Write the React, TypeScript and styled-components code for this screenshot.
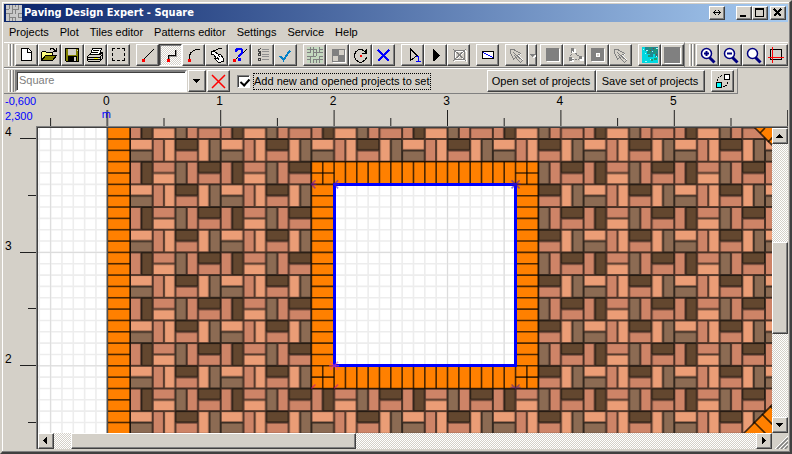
import React from "react";
import styled, { createGlobalStyle, css } from "styled-components";

const FACE = "#d4d0c8";
const SHADOW = "#808080";
const DARK = "#404040";
const CHECKER = `repeating-conic-gradient(#ffffff 0 25%, ${FACE} 0 50%) 0 0 / 2px 2px`;

const GlobalStyle = createGlobalStyle`
  * { box-sizing: border-box; }
  html, body, #root { height: 100%; }
  body {
    margin: 0;
    background: ${FACE};
    color: #000;
    font: 11px/14px "Liberation Sans", Arial, sans-serif;
    overflow: hidden;
  }
  button, input { font: inherit; color: inherit; }
`;

const raised = css`
  background: ${FACE};
  border: 1px solid;
  border-color: #fff ${DARK} ${DARK} #fff;
  box-shadow: inset -1px -1px 0 ${SHADOW};
`;

const Frame = styled.div`
  display: flex;
  flex-direction: column;
  height: 100%;
  min-height: 300px;
  padding: 2px;
  background: ${FACE};
  border: 2px solid;
  border-color: ${FACE} ${DARK} ${DARK} ${FACE};
  box-shadow: inset -1px -1px 0 ${SHADOW}, inset 1px 1px 0 #fff;
`;

const TitleBar = styled.header`
  display: flex;
  align-items: center;
  flex: none;
  height: 18px;
  padding: 0 2px;
  background: linear-gradient(90deg, #0a246a, #a6caf0);
`;

const Title = styled.h1`
  flex: 1;
  margin: 0 0 0 2px;
  color: #fff;
  font: bold 11px/16px "DejaVu Sans Condensed", "Liberation Sans", sans-serif;
  white-space: nowrap;
`;

const CaptionButton = styled.button<{ $gap?: number }>`
  ${raised}
  display: grid;
  place-items: center;
  width: 16px;
  height: 14px;
  padding: 0;
  margin-right: ${(p) => p.$gap ?? 0}px;
`;

const MenuBar = styled.nav`
  display: flex;
  flex: none;
  height: 20px;
  padding-left: 5px;
  gap: 11px;
  line-height: 18px;
`;

const MenuItem = styled.button`
  padding: 0;
  border: 0;
  background: none;
  white-space: nowrap;
`;

const ToolRow = styled.div`
  display: flex;
  flex: none;
  height: 26px;
`;

const Band = styled.div<{ $grow?: boolean }>`
  display: flex;
  align-items: center;
  flex: ${(p) => (p.$grow ? "1 0 auto" : "none")};
  padding-left: 4px;
  border-top: 1px solid #fff;
  border-bottom: 1px solid ${SHADOW};
  border-right: ${(p) => (p.$grow ? `1px solid ${SHADOW}` : "0")};
`;

const Grip = styled.span`
  flex: none;
  width: 6px;
  height: 22px;
  margin-right: 1px;
  background: linear-gradient(90deg, #fff 0 1px, ${FACE} 1px 2px, ${SHADOW} 2px 3px) 0 0 / 3px 100%;
`;

const Group = styled.div<{ $tight?: boolean }>`
  display: flex;
  margin-right: ${(p) => (p.$tight ? 3 : 6)}px;
  &:last-child { margin-right: 0; }
`;

const ToolButton = styled.button<{ $on?: boolean; $narrow?: boolean }>`
  ${raised}
  display: grid;
  place-items: center start;
  flex: none;
  width: ${(p) => (p.$narrow ? 9 : 23)}px;
  height: 22px;
  padding: 0;
  overflow: hidden;
  ${(p) =>
    p.$on &&
    css`
      background: ${CHECKER};
      border-color: ${DARK} #fff #fff ${DARK};
      box-shadow: inset 1px 1px 0 ${SHADOW};
    `}
`;

const SetBand = styled(Band)`
  padding-right: 3px;
  border-right: 1px solid ${SHADOW};
`;

const SetName = styled.input`
  width: 172px;
  height: 22px;
  padding: 0 2px 2px;
  border: 2px solid;
  border-color: ${SHADOW} #fff #fff ${SHADOW};
  background: #fff;
  color: #808080;
  outline: 0;
  box-shadow: inset 1px 1px 0 ${DARK};
`;

const DropButton = styled.button`
  ${raised}
  display: grid;
  place-items: center;
  width: 18px;
  height: 22px;
  padding: 0;
  margin: 0 1px;
`;

const SetCheck = styled.label`
  display: flex;
  align-items: center;
  gap: 3px;
  margin: 0 56px 0 7px;
  white-space: nowrap;
  span { border: 1px dotted #000; line-height: 15px; }
`;

const CheckBox = styled.input`
  appearance: none;
  width: 13px;
  height: 13px;
  margin: 0;
  background: #fff;
  border: 1px solid;
  border-color: ${SHADOW} #fff #fff ${SHADOW};
  box-shadow: inset 1px 1px 0 ${DARK};
  &:checked::before {
    content: "";
    display: block;
    width: 4px;
    height: 7px;
    margin: 1px 0 0 4px;
    border: solid #000;
    border-width: 0 2px 2px 0;
    transform: rotate(42deg);
  }
`;

const TextButton = styled.button`
  ${raised}
  width: 109px;
  height: 22px;
  padding: 0;
  white-space: nowrap;
`;

const Workspace = styled.main`
  display: grid;
  flex: 1;
  min-height: 0;
  grid-template: 32px minmax(0, 1fr) / 32px minmax(0, 1fr);
`;

const Coordinates = styled.output`
  padding-left: 1px;
  color: #0000ff;
  line-height: 15px;
  white-space: nowrap;
  z-index: 1;
`;

const Ruler = styled.svg`
  display: block;
  width: 100%;
  height: 100%;
  overflow: hidden;
`;

const Viewport = styled.section`
  display: grid;
  grid-template: minmax(0, 1fr) 16px / minmax(0, 1fr) 16px;
  margin-bottom: 1px;
  border: solid;
  border-width: 1px 0 0 1px;
  border-color: ${SHADOW};
  box-shadow: inset 1px 1px 0 ${DARK};
  padding: 1px 0 0 1px;
`;

const Drawing = styled.svg`
  display: block;
  width: 100%;
  height: 100%;
  background: #fff;
`;

const ScrollBar = styled.div<{ $vertical?: boolean }>`
  display: flex;
  flex-direction: ${(p) => (p.$vertical ? "column" : "row")};
  background: ${CHECKER};
`;

const ScrollButton = styled.button`
  ${raised}
  display: grid;
  place-items: center;
  flex: none;
  width: 16px;
  height: 16px;
  padding: 0;
`;

const TrackPart = styled.span<{ $weight: number }>`
  flex: ${(p) => p.$weight} 1 0;
`;

const Thumb = styled.span<{ $weight: number }>`
  ${raised}
  flex: ${(p) => p.$weight} 1 0;
`;

/* ---------- icons: 20 x 20, drawn on whole pixels ---------- */

const Icon = ({ children, smooth }: { children: React.ReactNode; smooth?: boolean }) => (
  <svg width="20" height="20" viewBox="0 0 20 20" fill="none" stroke="#000" shapeRendering={smooth ? "auto" : "crispEdges"} aria-hidden="true">
    {children}
  </svg>
);

const RedDot = ({ x, y }: { x: number; y: number }) => <rect x={x} y={y} width="3" height="3" fill="#f00" stroke="none" />;

const NewIcon = () => (
  <Icon>
    <path d="M5.5 3.5h7l3 3v9h-10z" fill="#fff" />
    <path d="M11.5 3.5v4h4" />
  </Icon>
);
const OpenIcon = () => (
  <Icon>
    <path d="M2.5 15.5v-8l1-1h3l1 1h6v3" fill="#ffff80" />
    <path d="M2.5 15.5l4-5h11l-4 5z" fill="#808000" />
    <path d="M10.5 4.5h1v-1h3v1h1v1h1v1M17.5 3v4M14 6.5h4" />
  </Icon>
);
const SaveIcon = () => (
  <Icon>
    <path d="M3.5 3.5h13v13h-12l-1-1z" fill="#808000" />
    <rect x="6" y="4" width="8" height="6" fill={FACE} stroke="none" />
    <rect x="6" y="11" width="9" height="5" fill="#000" stroke="none" />
    <rect x="12" y="12" width="2" height="4" fill={FACE} stroke="none" />
    <path d="M15 5.5h1" stroke={FACE} />
  </Icon>
);
const PrintIcon = () => (
  <Icon>
    <path d="M5.5 9.5l2-6h9l-2 6" fill="#fff" />
    <path d="M8 5.5h6M7 7.5h6" />
    <path d="M4.5 9.5h11l2-2v6l-3 3h-11l-1-1v-4z" fill={FACE} />
    <path d="M2.5 12.5h12l3-3M3 14.5h12M15.5 12v4M14.5 10l3-3" />
    <path d="M9 13.5h4" stroke="#ffff00" />
  </Icon>
);
const SelectIcon = () => (
  <Icon>
    <path d="M4 3.5h3m2 0h3m2 0h3M4 15.5h3m2 0h3m2 0h3M4.5 3v3m0 2v3m0 2v3M16.5 3v3m0 2v3m0 2v3" />
  </Icon>
);
const LineIcon = () => (
  <Icon>
    <path d="M7 14L17 4" />
    <RedDot x={5} y={14} />
  </Icon>
);
const PolylineIcon = () => (
  <Icon>
    <path d="M8.5 15v-4.5h7V5" />
    <path d="M9.5 15v-3.500h7V5" strokeOpacity="0.35" />
    <RedDot x={7} y={14} />
  </Icon>
);
const ArcIcon = () => (
  <Icon>
    <path d="M6.500 14v-3l1-3 3-2.500 3-1h3.500" />
    <RedDot x={5} y={14} />
  </Icon>
);
const HandIcon = () => (
  <Icon>
    <path d="M16 3.5h-3l-4 2-3 1" />
    <path d="M5.5 6.5h3l4 3h2l3 4v3h-2l-1 1h-2l-4-4h2l-3-4h-2z" fill="#fff" />
    <path d="M12.5 10.5l2 2M11 12.5l2 2" />
  </Icon>
);
const QuestionIcon = () => (
  <Icon>
    <path d="M6 15L18 4" />
    <path d="M7 7V5l2-1h3l1 1v3l-2 2-1 1v1M9 14.5h3" stroke="#0000ff" strokeWidth="2.4" />
    <RedDot x={4} y={14} />
  </Icon>
);
const ListIcon = () => (
  <Icon>
    <path d="M9 3.500L6.500 5M6.500 8v2h2v-2h-2M9 7L6.500 8.500M6.500 12.500v3h2v-2.500h-2M6.500 5v1h2" stroke="#404040" />
    <path d="M10 4.500h7m-7 2h7m-7 3h7m-7 2h7m-7 3h7" stroke="#909090" />
  </Icon>
);
const CheckIcon = () => (
  <Icon>
    <path d="M5 11l3.500 4L15 5.500" stroke="#0080c8" strokeWidth="2" />
  </Icon>
);
const WeaveIcon = () => (
  <Icon>
    <rect x="3" y="2" width="16" height="16" fill="#c4d8bf" stroke="none" />
    <path d="M3 4.500h9m3 0h4M3 7.500h4m3 0h9M3 11.500h9m3 0h4M3 14.500h4m3 0h9M6.500 2v5m0 4v7M9.500 2v9m0 3v4M12.500 4v7m0 3v4M15.500 2v5m0 4v7" stroke="#808080" />
  </Icon>
);
const TilesIcon = () => (
  <Icon>
    <path d="M5 4h13v13H5z" fill="#808080" stroke="none" />
    <path d="M12 5h5v5h-5zM6 11h5v5H6z" fill={FACE} stroke="none" />
    <path d="M18.500 5v12.500H6" stroke="#fff" />
  </Icon>
);
const RotateIcon = () => (
  <Icon>
    <path d="M14 5.500h-1l-1-1H9l-3 2-1.500 3v3L6 15l3 2h3l3-2 2-3" />
    <path d="M12 8.500h4.500V4M14 6.500h2M15 5v3" />
    <rect x="10" y="10" width="2" height="2" fill="#f00" stroke="none" />
  </Icon>
);
const BlueCrossIcon = () => (
  <Icon>
    <path d="M5 5l11 11M16 5L5 16" stroke="#0000ff" strokeWidth="2" />
  </Icon>
);
const StepIcon = () => (
  <Icon>
    <path d="M8.500 4v11.500l6.500-5z" />
    <path d="M14 11.500h2.500V16M14 16.500h5" stroke="#0000ff" />
  </Icon>
);
const PlayIcon = () => (
  <Icon>
    <path d="M8 4v12h1l6-6z" fill="#000" stroke="none" />
  </Icon>
);
const NoBoxIcon = () => (
  <Icon>
    <path d="M6 5l13 12M18 5L6 17M7 6.500h11v9H7z" stroke="#fff" />
    <path d="M5 4l13 12M18 4L5 16M6.500 5.500h10v9h-10z" stroke="#808080" />
  </Icon>
);
const PlanIcon = () => (
  <Icon>
    <rect x="5.500" y="6.500" width="11" height="7" fill="#fff" />
    <path d="M6 7.500l10 5" stroke="#0000ff" />
  </Icon>
);
const GreyPointerIcon = () => (
  <Icon>
    <path d="M5 5v3l3 6 2-2 5 5 2-2-5-5 3-1-7-4z" stroke="#fff" />
    <path d="M4.500 4.500h3l7 4-3 2 5 5-2 2-5-5-2 2-3-7z" fill={FACE} stroke="#808080" />
    <path d="M7 7l7 7M8 10l3 3" stroke="#808080" />
  </Icon>
);
const DropGlyph = () => (
  <svg width="7" height="20" viewBox="0 0 7 20" shapeRendering="crispEdges" aria-hidden="true">
    <path d="M1 9h5v1H5v1H4v1H3v-1H2v-1H1z" fill="#808080" />
    <path d="M4 12h1v-1h1v-1h1" stroke="#fff" fill="none" />
  </svg>
);
const GreySquareIcon = () => (
  <Icon>
    <rect x="6" y="4" width="13" height="13" fill="#fff" stroke="none" />
    <rect x="5" y="3" width="13" height="13" fill="#808080" stroke="none" />
  </Icon>
);
const NodesIcon = () => (
  <Icon>
    <path d="M8 4h3v3H8zM6 13h3v3H6zM16 12h3v3h-3z" fill="#fff" stroke="#fff" />
    <path d="M8 6l-2 8m3-8l7 6M8 14.500h7" stroke="#808080" strokeDasharray="2 1" />
    <path d="M7 3h3v3H7zM5 12h3v4H5zM15 11h3v3h-3z" fill="#808080" stroke="none" />
  </Icon>
);
const HoleIcon = () => (
  <Icon>
    <path d="M5 4h13v13H5z" fill="#fff" stroke="none" />
    <path d="M4 3h13v13H4z" fill="#808080" stroke="none" />
    <path d="M9 8h4v4H9z" fill="#fff" stroke="none" />
    <path d="M10 9h2v2h-2z" fill={FACE} stroke="none" />
  </Icon>
);
const TextureIcon = () => (
  <Icon>
    <rect x="3" y="2" width="16" height="16" fill="#00d8e0" stroke="none" />
    <path d="M6 2h13v10h-3V9h-2v3h-3V9H8V6H6z" fill="#208890" stroke="none" />
    <path d="M10 3h2m3 2h3m-9 2h3m3 1h2m-8 3h2m4 3h3m-6 1h2" stroke="#209a70" strokeWidth="2" />
    <path d="M4 4h1m1 4h1m6-2h1m3 5h1m-7 3h1m-6 2h2M7 5h2m8-2h2" stroke="#a0ffff" />
    <path d="M14 3h1m-4 2h1m5 4h1" stroke="#804040" />
  </Icon>
);
const GreyPatchIcon = () => (
  <Icon>
    <rect x="3" y="3" width="16" height="16" fill="#fff" stroke="none" />
    <rect x="2" y="2" width="16" height="16" fill="#808080" stroke="none" />
  </Icon>
);
const ZoomIcon = ({ sign }: { sign?: "plus" | "minus" }) => (
  <Icon smooth>
    <path d="M12.500 12.500l5 5" stroke="#000080" strokeWidth="3" />
    <circle cx="9.500" cy="8.500" r="5" fill="#fff" stroke="#000080" strokeWidth="1.500" />
    {sign && <path d="M7 8.500h5" stroke="#000080" strokeWidth="2" />}
    {sign === "plus" && <path d="M9.500 6v5" stroke="#000080" strokeWidth="2" />}
  </Icon>
);
const CropIcon = () => (
  <Icon>
    <path d="M4.500 4.500h11v10h-11z" />
    <path d="M2 12.500h16M6.500 2v16" stroke="#f00" />
  </Icon>
);
const RedCrossIcon = () => (
  <Icon smooth>
    <path d="M4 4l13 13M17 4L4 17" stroke="#f00" strokeWidth="1.500" />
  </Icon>
);
const LinkIcon = () => (
  <Icon>
    <path d="M12.500 3.500h5v5h-5z" fill="#fff" />
    <path d="M4.500 11.500h5v5h-5z" fill="#00ffff" />
    <path d="M5 10l2-4 4-2M16 11l-1 3-4 2" strokeDasharray="2 1" />
  </Icon>
);
const Arrow = ({ d }: { d: string }) => (
  <svg width="8" height="8" viewBox="0 0 8 8" shapeRendering="crispEdges" aria-hidden="true">
    <path d={d} />
  </svg>
);
const ARROW_UP = "M3 2h1v1h1v1h1v1h1v1H0V5h1V4h1V3h1z";
const ARROW_DOWN = "M0 2h7v1H6v1H5v1H4v1H3V5H2V4H1V3H0z";
const ARROW_LEFT = "M5 0v7H4V6H3V5H2V4H1V3h1V2h1V1h1V0z";
const ARROW_RIGHT = "M2 0v7h1V6h1V5h1V4h1V3H5V2H4V1H3V0z";

type Tool = { name: string; icon: React.ReactNode; on?: boolean; narrow?: boolean };

const TOOLS: Tool[][] = [
  [
    { name: "New", icon: <NewIcon /> },
    { name: "Open", icon: <OpenIcon /> },
    { name: "Save", icon: <SaveIcon /> },
    { name: "Print", icon: <PrintIcon /> },
    { name: "Select area", icon: <SelectIcon /> },
  ],
  [
    { name: "Line", icon: <LineIcon /> },
    { name: "Polyline", icon: <PolylineIcon />, on: true },
    { name: "Arc", icon: <ArcIcon /> },
    { name: "Edit point", icon: <HandIcon /> },
    { name: "Line properties", icon: <QuestionIcon /> },
    { name: "Contours", icon: <ListIcon /> },
    { name: "Accept", icon: <CheckIcon /> },
  ],
  [
    { name: "Pattern", icon: <WeaveIcon /> },
    { name: "Tiles", icon: <TilesIcon /> },
    { name: "Rotate", icon: <RotateIcon /> },
    { name: "Delete", icon: <BlueCrossIcon /> },
  ],
  [
    { name: "One step", icon: <StepIcon /> },
    { name: "Run", icon: <PlayIcon /> },
    { name: "Clear paving", icon: <NoBoxIcon /> },
  ],
  [{ name: "Plan", icon: <PlanIcon /> }],
  [
    { name: "Pick tile", icon: <GreyPointerIcon /> },
    { name: "Pick options", icon: <DropGlyph />, narrow: true },
  ],
  [
    { name: "Fill", icon: <GreySquareIcon /> },
    { name: "Nodes", icon: <NodesIcon /> },
    { name: "Cut hole", icon: <HoleIcon /> },
    { name: "Pick colour", icon: <GreyPointerIcon /> },
  ],
  [
    { name: "Texture", icon: <TextureIcon /> },
    { name: "Plain colour", icon: <GreyPatchIcon /> },
  ],
];

const ZOOM_TOOLS: Tool[] = [
  { name: "Zoom in", icon: <ZoomIcon sign="plus" /> },
  { name: "Zoom out", icon: <ZoomIcon sign="minus" /> },
  { name: "Zoom", icon: <ZoomIcon /> },
  { name: "Fit to view", icon: <CropIcon /> },
];

const ToolGroup = ({ tools }: { tools: Tool[] }) => (
  <Group $tight={tools.some((t) => t.narrow)}>
    {tools.map((t) => (
      <ToolButton key={t.name} aria-label={t.name} aria-pressed={t.on} $on={t.on} $narrow={t.narrow}>
        {t.icon}
      </ToolButton>
    ))}
  </Group>
);

/* ---------- plot geometry: metres to drawing pixels ---------- */

const SCALE = 113.4;
const X0 = 69.3;
const Y4 = 11;
const px = (m: number) => X0 + m * SCALE;
const py = (m: number) => Y4 + (4 - m) * SCALE;
const CELL = SCALE / 5;
const HALF = CELL / 2;

const PINK = "#ce8467";
const LIGHT = "#eb9d76";
const UMBER = "#63472f";
const BROWN = "#8c6b53";
const ORANGE = "#ff8000";
const JOINT = "rgba(0,0,0,0.7)";

const PAIRS = [
  [[PINK, UMBER], [PINK, LIGHT], [BROWN, PINK], [UMBER, PINK]],
  [[LIGHT, BROWN], [PINK, LIGHT], [UMBER, PINK], [LIGHT, BROWN]],
];

const range = (n: number) => Array.from({ length: n }, (_, i) => i);

const BRICKS = PAIRS.flatMap((row, r) =>
  row.flatMap((pair, c) =>
    pair.map((fill, i) => {
      const upright = (r + c) % 2 === 0;
      return {
        fill,
        x: c * CELL + (upright ? i * HALF : 0),
        y: r * CELL + (upright ? 0 : i * HALF),
        width: upright ? HALF : CELL,
        height: upright ? CELL : HALF,
      };
    })
  )
);

const JOINTS =
  `M0 0H${CELL * 4}M0 ${CELL}H${CELL * 4}M0 ${CELL * 2}H${CELL * 4}` +
  range(5).map((c) => `M${c * CELL} 0V${CELL * 2}`).join("") +
  range(8)
    .map((k) => {
      const r = k >> 2;
      const c = k % 4;
      return (r + c) % 2 === 0
        ? `M${c * CELL + HALF} ${r * CELL}v${CELL}`
        : `M${c * CELL} ${r * CELL + HALF}h${CELL}`;
    })
    .join("");

const Bricks = () => (
  <>
    <defs>
      <pattern id="basket" patternUnits="userSpaceOnUse" x={px(0.2)} y={py(4.2)} width={CELL * 4} height={CELL * 2}>
        {BRICKS.map((brick, i) => (
          <rect key={i} {...brick} stroke={brick.fill} strokeWidth="0.5" />
        ))}
        <path d={JOINTS} stroke="rgba(0,0,0,0.64)" strokeWidth="2" fill="none" />
      </pattern>
    </defs>
    <rect x={px(0.2)} y="0" width="4000" height="4000" fill="url(#basket)" />
  </>
);

const Grid = () => (
  <g stroke="#ededed" strokeWidth="1.6">
    {range(160).map((i) => (
      <path key={`v${i}`} d={`M${px(-0.6 + i / 10)} 0V4000`} />
    ))}
    {range(160).map((i) => (
      <path key={`h${i}`} d={`M0 ${py(4 - i / 10)}H4000`} />
    ))}
    <g stroke="#dcdcdc" strokeWidth="1">
      {range(30).map((i) => (
        <path key={i} d={`M${px(i / 2 - 0.5)} 0V4000M0 ${py(4 - i)}H4000`} />
      ))}
    </g>
  </g>
);

const Kerb = () => (
  <g stroke={JOINT} strokeWidth="1.6">
    <rect x={px(0)} y="-2" width={CELL} height="4000" fill={ORANGE} />
    {range(200).map((i) => (
      <path key={i} d={`M${px(0)} ${py(4 - i / 10)}h${CELL}`} />
    ))}
  </g>
);

const Opening = () => (
  <g stroke={JOINT} strokeWidth="1.6">
    <path
      d={`M${px(1.8)} ${py(3.8)}H${px(3.8)}V${py(1.8)}H${px(1.8)}zM${px(2)} ${py(3.6)}V${py(2)}H${px(3.6)}V${py(3.6)}z`}
      fill={ORANGE}
      fillRule="evenodd"
    />
    {range(19).map((i) => (
      <path key={`v${i}`} d={`M${px(1.9 + i / 10)} ${py(3.8)}v${CELL}m0 ${CELL * 8}v${CELL}`} />
    ))}
    {range(19).map((i) => (
      <path key={`h${i}`} d={`M${px(1.8)} ${py(3.7 - i / 10)}h${CELL}m${CELL * 8} 0h${CELL}`} />
    ))}
  </g>
);

const FULL = "m-4 -4l8 8m0 -8l-8 8m-1 -4h10";
const RIGHT = "h5m-1 -4l-4 4l4 4";
const RISING = "l4 -4";
const UPPER = "m-4 -4l4 4l4 -4m-9 3h10";

const MARKS: [number, number, string, string][] = [
  [1.8, 3.6, RIGHT, "#7010b0"],
  [2, 3.6, RIGHT, "#5020d0"],
  [3.6, 3.6, FULL, "#4018b0"],
  [2, 2, FULL, "#f040a0"],
  [1.8, 1.8, RISING, "#c01090"],
  [2, 1.8, RISING, "#c01090"],
  [3.6, 1.8, UPPER, "#502090"],
];

const Plot = () => (
  <Drawing role="img" aria-label="Paved area with a square opening">
    <rect width="100%" height="100%" fill="#fff" />
    <Bricks />
    <Kerb />
    <path d={`M0 0H${px(0)}V4000H0zM${px(2)} ${py(3.6)}H${px(3.6)}V${py(2)}H${px(2)}z`} fill="#fff" />
    <clipPath id="bare">
      <path d={`M0 0H${px(0) - 1}V4000H0zM${px(2)} ${py(3.6)}H${px(3.6)}V${py(2)}H${px(2)}z`} />
    </clipPath>
    <g clipPath="url(#bare)">
      <Grid />
    </g>
    <path d={`M${px(0)} 0V4000`} stroke="#505050" strokeWidth="1.6" />
    <Opening />
    <g stroke={JOINT} strokeWidth="1.6" fill={ORANGE}>
      <path d="M716 -1L740 23V-1z" />
      <path d="M722 5l5-5M730 14l8-8" />
      <path d="M705 306L740 271V320z" />
      <path d="M716 294l14 14M724 286l14 14M732 278l12 12" />
    </g>
    <path
      d={`M${px(2)} ${py(3.6)}H${px(3.6)}V${py(2)}H${px(2)}z`}
      fill="none"
      stroke="#0000ff"
      strokeWidth="3"
      shapeRendering="crispEdges"
    />
    <g strokeWidth="1.5" fill="none">
      {MARKS.map(([x, y, shape, stroke]) => (
        <path key={`${x},${y}`} d={`M${px(x)} ${py(y)}${shape}`} stroke={stroke} strokeOpacity="0.6" />
      ))}
    </g>
  </Drawing>
);

const TopRuler = () => (
  <Ruler aria-label="Horizontal ruler">
    {range(30).map((i) => (
      <path key={i} d={`M${px(i / 2 - 0.5) + 2} ${i % 2 ? 16 : 24}V32`} stroke={i === 1 ? "#606060" : "#202020"} strokeWidth={i === 1 ? 2 : 1} />
    ))}
    {range(6).map((n) => (
      <text key={n} x={px(n) + 1} y="11" fontSize="12" textAnchor="middle">
        {n}
      </text>
    ))}
    <text x={px(0) + 1} y="24" textAnchor="middle" fill="#0000ff">
      m
    </text>
  </Ruler>
);

const SideRuler = () => (
  <Ruler aria-label="Vertical ruler">
    {range(9).map((i) => (
      <path key={i} d={`M${i % 2 ? 24 : 16} ${Math.round(py(4 - i / 2) + 0.2) + 1.5}H32`} stroke="#202020" />
    ))}
    {range(3).map((i) => (
      <text key={i} x="1" y={Math.round(py(4 - i) + 0.2) - 1} fontSize="12">
        {4 - i}
      </text>
    ))}
  </Ruler>
);

const MENUS = ["Projects", "Plot", "Tiles editor", "Patterns editor", "Settings", "Service", "Help"];

export default function App() {
  return (
    <Frame>
      <GlobalStyle />
      <TitleBar>
        <svg width="16" height="16" viewBox="0 0 16 16" shapeRendering="crispEdges" aria-hidden="true">
          <rect width="16" height="16" fill="#c8c8c8" />
          <path d="M0 4.500h3m3 0h7M0 8.500h7m5 0h4M3 12.500h6m3 0h4M3.500 0v4m0 4v8M6.500 0v9m0 3v4M9.500 4v5m0 3v4M12.500 0v4m0 4v5M9.500 0v2" stroke="#848484" />
        </svg>
        <Title>Paving Design Expert - Square</Title>
        <CaptionButton aria-label="Stretch" $gap={11}>
          <svg width="10" height="8" viewBox="0 0 10 8" shapeRendering="crispEdges"><path d="M1 3.500h8M2.500 2v3M7.500 2v3M3.500 1v1m0 3v1M6.500 1v1m0 3v1" stroke="#000" /></svg>
        </CaptionButton>
        <CaptionButton aria-label="Minimize">
          <svg width="10" height="10" shapeRendering="crispEdges"><path d="M1 8h6" stroke="#000" strokeWidth="2" /></svg>
        </CaptionButton>
        <CaptionButton aria-label="Maximize" $gap={2}>
          <svg width="10" height="10" shapeRendering="crispEdges"><path d="M.5 1h8v7.500h-8z" fill="none" stroke="#000" /><path d="M0 1h9" stroke="#000" strokeWidth="2" /></svg>
        </CaptionButton>
        <CaptionButton aria-label="Close">
          <svg width="10" height="10" shapeRendering="crispEdges"><path d="M1 1l7 7M8 1L1 8" stroke="#000" strokeWidth="2" /></svg>
        </CaptionButton>
      </TitleBar>

      <MenuBar>
        {MENUS.map((m) => (
          <MenuItem key={m}>{m}</MenuItem>
        ))}
      </MenuBar>

      <ToolRow role="toolbar" aria-label="Tools">
        <Band $grow>
          <Grip />
          {TOOLS.map((tools, i) => (
            <ToolGroup key={i} tools={tools} />
          ))}
        </Band>
        <Band>
          <Grip />
          <ToolGroup tools={ZOOM_TOOLS} />
        </Band>
      </ToolRow>

      <ToolRow role="toolbar" aria-label="Set of projects">
        <SetBand>
          <Grip />
          <SetName aria-label="Set name" defaultValue="Square" />
          <DropButton aria-label="Choose set">
            <Arrow d={ARROW_DOWN} />
          </DropButton>
          <ToolButton aria-label="Remove set">
            <RedCrossIcon />
          </ToolButton>
          <SetCheck>
            <CheckBox type="checkbox" defaultChecked />
            <span>Add new and opened projects to set</span>
          </SetCheck>
          <Group>
            <TextButton>Open set of projects</TextButton>
            <TextButton>Save set of projects</TextButton>
          </Group>
          <ToolButton aria-label="Link projects">
            <LinkIcon />
          </ToolButton>
        </SetBand>
      </ToolRow>

      <Workspace>
        <Coordinates>
          -0,600
          <br />
          2,300
        </Coordinates>
        <TopRuler />
        <SideRuler />
        <Viewport>
          <Plot />
          <ScrollBar $vertical>
            <ScrollButton aria-label="Scroll up">
              <Arrow d={ARROW_UP} />
            </ScrollButton>
            <TrackPart $weight={99} />
            <Thumb $weight={91} />
            <TrackPart $weight={84} />
            <ScrollButton aria-label="Scroll down">
              <Arrow d={ARROW_DOWN} />
            </ScrollButton>
          </ScrollBar>
          <ScrollBar>
            <ScrollButton aria-label="Scroll left">
              <Arrow d={ARROW_LEFT} />
            </ScrollButton>
            <TrackPart $weight={17} />
            <Thumb $weight={284} />
            <TrackPart $weight={402} />
            <ScrollButton aria-label="Scroll right">
              <Arrow d={ARROW_RIGHT} />
            </ScrollButton>
          </ScrollBar>
          <svg width="16" height="16" viewBox="0 0 16 16" aria-hidden="true">
            <path d="M3 16L16 3M7 16l9-9M11 16l5-5" stroke="#fff" />
            <path d="M5 16L16 5M9 16l7-7M13 16l3-3" stroke="#808080" strokeWidth="1.500" />
          </svg>
        </Viewport>
      </Workspace>
    </Frame>
  );
}
